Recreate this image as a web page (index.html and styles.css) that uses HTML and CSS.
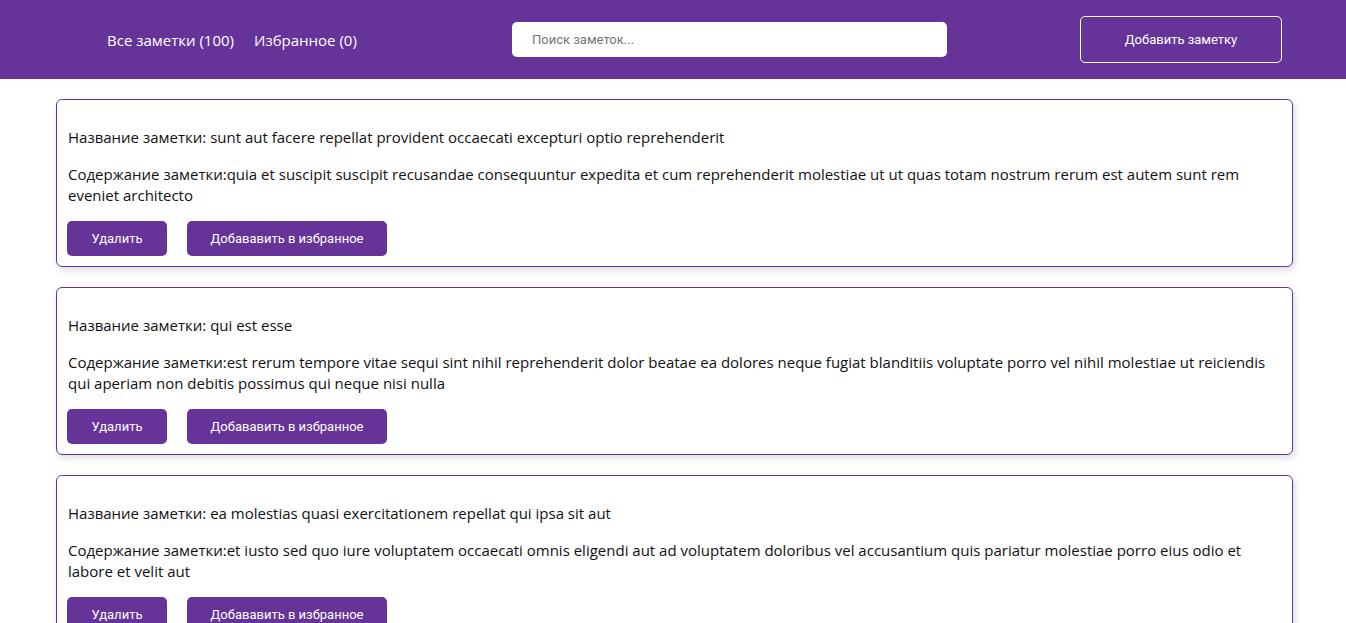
FILE: index.html
```html
<!DOCTYPE html>
<html lang="ru">
<head>
<meta charset="utf-8">
<title>Заметки</title>
<link rel="stylesheet" href="styles.css">
</head>
<body>
<header class="header">
  <nav class="nav">
    <a class="nav-link" href="#">Все заметки (100)</a>
    <a class="nav-link" href="#">Избранное (0)</a>
  </nav>
  <input class="search" type="text" placeholder="Поиск заметок...">
  <button class="add-btn">Добавить заметку</button>
</header>
<main class="list">
  <article class="card">
    <p class="title">Название заметки: sunt aut facere repellat provident occaecati excepturi optio reprehenderit</p>
    <p class="body">Содержание заметки:quia et suscipit suscipit recusandae consequuntur expedita et cum reprehenderit molestiae ut ut quas totam nostrum rerum est autem sunt rem eveniet architecto</p>
    <div class="actions">
      <button class="btn btn-del">Удалить</button>
      <button class="btn btn-fav">Добававить в избранное</button>
    </div>
  </article>
  <article class="card">
    <p class="title">Название заметки: qui est esse</p>
    <p class="body">Содержание заметки:est rerum tempore vitae sequi sint nihil reprehenderit dolor beatae ea dolores neque fugiat blanditiis voluptate porro vel nihil molestiae ut reiciendis qui aperiam non debitis possimus qui neque nisi nulla</p>
    <div class="actions">
      <button class="btn btn-del">Удалить</button>
      <button class="btn btn-fav">Добававить в избранное</button>
    </div>
  </article>
  <article class="card">
    <p class="title">Название заметки: ea molestias quasi exercitationem repellat qui ipsa sit aut</p>
    <p class="body">Содержание заметки:et iusto sed quo iure voluptatem occaecati omnis eligendi aut ad voluptatem doloribus vel accusantium quis pariatur molestiae porro eius odio et labore et velit aut</p>
    <div class="actions">
      <button class="btn btn-del">Удалить</button>
      <button class="btn btn-fav">Добававить в избранное</button>
    </div>
  </article>
</main>
</body>
</html>
```
FILE: styles.css
```css
* { box-sizing: border-box; }
body {
  margin: 0;
  font-family: "Open Sans", "Noto Sans", sans-serif;
  color: #111;
  background: #fff;
}
.header {
  height: 79px;
  background: #663399;
  display: flex;
  align-items: center;
  padding-left: 107px;
}
.nav {
  display: flex;
  gap: 20px;
  width: 253px;
}
.nav-link {
  color: #fff;
  text-decoration: none;
  font-size: 15px;
  white-space: nowrap;
}
.search {
  margin-left: 152px;
  width: 435px;
  height: 35px;
  border: none;
  border-radius: 5px;
  padding: 0 20px;
  font-family: Roboto, "Liberation Sans", sans-serif;
  font-size: 13px;
  outline: none;
}
.search::placeholder { color: #757575; }
.add-btn {
  margin-left: 133px;
  width: 202px;
  height: 47px;
  background: transparent;
  border: 1px solid #fff;
  border-radius: 5px;
  color: #fff;
  font-family: Roboto, "Liberation Sans", sans-serif;
  font-size: 13px;
  font-weight: 400;
}
.list {
  padding: 20px 53px 20px 56px;
  display: flex;
  flex-direction: column;
  gap: 20px;
}
.card {
  border: 1px solid #663399;
  border-radius: 6px;
  padding: 11px 10px 10px;
  box-shadow: 2px 3px 7px rgba(0, 0, 0, 0.15);
  font-size: 15px;
  line-height: 21px;
}
.title, .body { margin: 16px 0; padding-left: 1px; }
.body { margin-bottom: 15px; }
.actions {
  display: flex;
  gap: 20px;
}
.btn {
  height: 35px;
  border: none;
  border-radius: 5px;
  background: #663399;
  color: #fff;
  font-family: Roboto, "Liberation Sans", sans-serif;
  font-size: 13px;
  font-weight: 400;
}
.btn-del { width: 100px; }
.btn-fav { width: 200px; }
```
